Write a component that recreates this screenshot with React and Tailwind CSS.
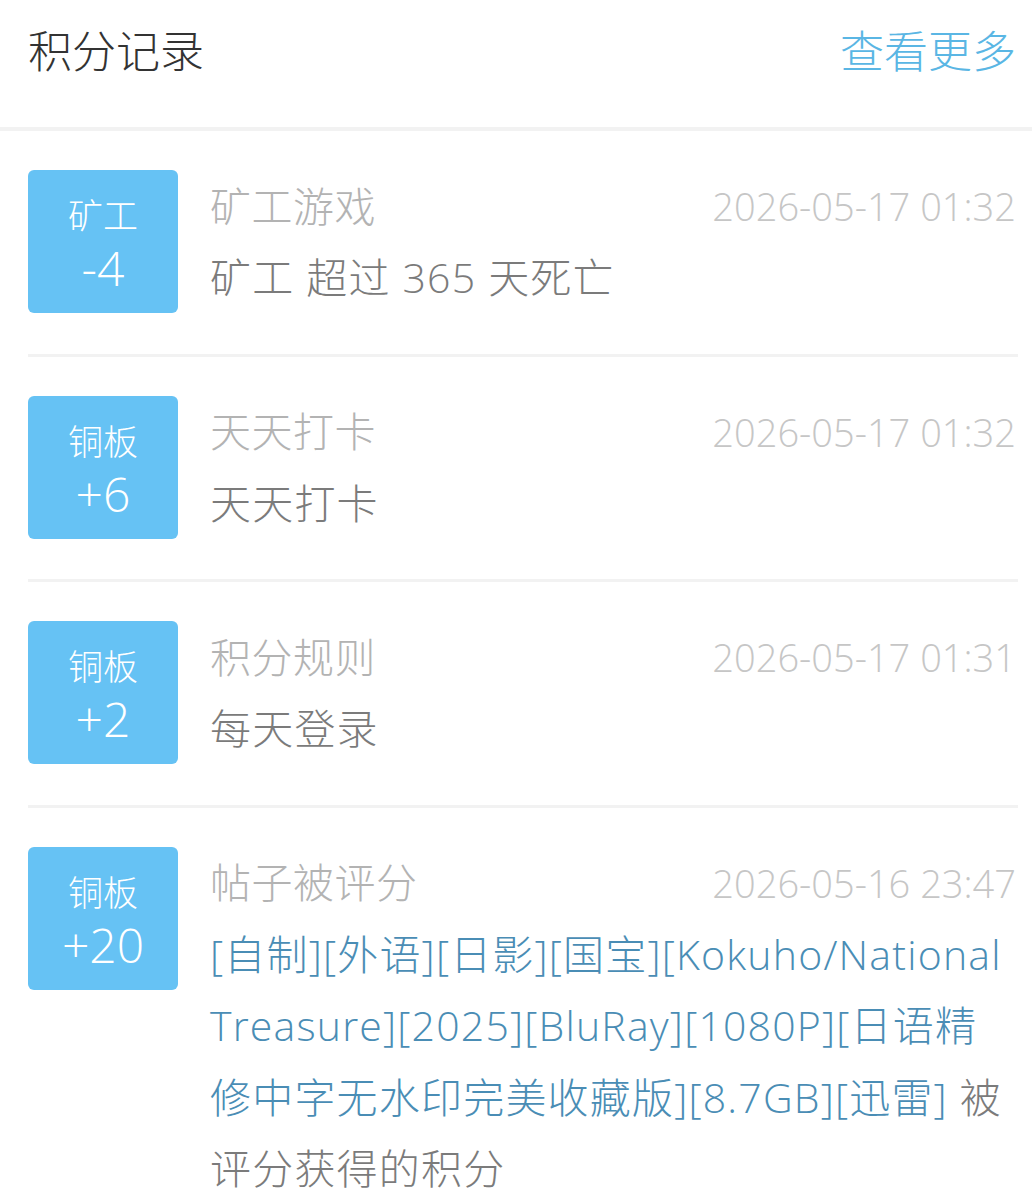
import React from 'react';

const records = [
    { id: 1, kind: '矿工', delta: '-4', title: '矿工游戏', time: '2026-05-17 01:32', desc: ['矿工 超过 365 天死亡'] },
    { id: 2, kind: '铜板', delta: '+6', title: '天天打卡', time: '2026-05-17 01:32', desc: ['天天打卡'] },
    { id: 3, kind: '铜板', delta: '+2', title: '积分规则', time: '2026-05-17 01:31', desc: ['每天登录'] },
    {
        id: 4, kind: '铜板', delta: '+20', title: '帖子被评分', time: '2026-05-16 23:47',
        // post title in blue, wrapped as the app shows it
        link: ['[自制][外语][日影][国宝][Kokuho/National', 'Treasure][2025][BluRay][1080P][日语精', '修中字无水印完美收藏版][8.7GB][迅雷]'],
        desc: [' 被', '评分获得的积分'],
    },
];

const App = () => {
    return (
        <div className="w-[1032px] min-h-[1200px] bg-white font-light font-['Open_Sans','Noto_Sans_CJK_SC',sans-serif]">
            {/* Header */}
            <div className="h-[127px] flex items-start justify-between pl-[28px] pr-[16px] pt-[18px]">
                <h1 className="text-[44px] leading-[66px] text-[#333333]">积分记录</h1>
                <span className="text-[44px] leading-[66px] text-[#5ab6e4]">查看更多</span>
            </div>
            <div className="h-[4px] bg-[#f2f2f2]" />

            {/* Records */}
            <div className="pl-[28px] pr-[14px]">
                {records.map((r) => (
                    <div key={r.id} className="flex gap-[32px] pt-[39px] pb-[40px] border-b-[3px] border-[#f2f2f2]">
                        <div className="w-[150px] h-[143px] shrink-0 rounded-[6px] bg-[#66c2f4] flex flex-col items-center text-white">
                            <span className="text-[35px] leading-[44px] mt-[24px]">{r.kind}</span>
                            <span className="text-[48px] leading-[56px] mt-[2px]">{r.delta}</span>
                        </div>
                        <div className="flex-1 min-w-0 pr-[2px]">
                            <div className="flex items-center justify-between h-[72px] pt-[1px]">
                                <span className="text-[41px] tracking-[0.5px] text-[#b3b3b3]">{r.title}</span>
                                <span className="text-[38px] text-[#c6c6c6]">{r.time}</span>
                            </div>
                            <p className="text-[41px] leading-[71.5px] tracking-[1.2px] text-[#7b7b7b] whitespace-nowrap">
                                {r.link ? (
                                    <>
                                        <span className="text-[#4a8db5]">{r.link[0]}</span><br />
                                        <span className="text-[#4a8db5]">{r.link[1]}</span><br />
                                        <span className="text-[#4a8db5]">{r.link[2]}</span>{r.desc[0]}<br />
                                        {r.desc[1]}
                                    </>
                                ) : r.desc[0]}
                            </p>
                        </div>
                    </div>
                ))}
            </div>
        </div>
    );
};

export default App;
